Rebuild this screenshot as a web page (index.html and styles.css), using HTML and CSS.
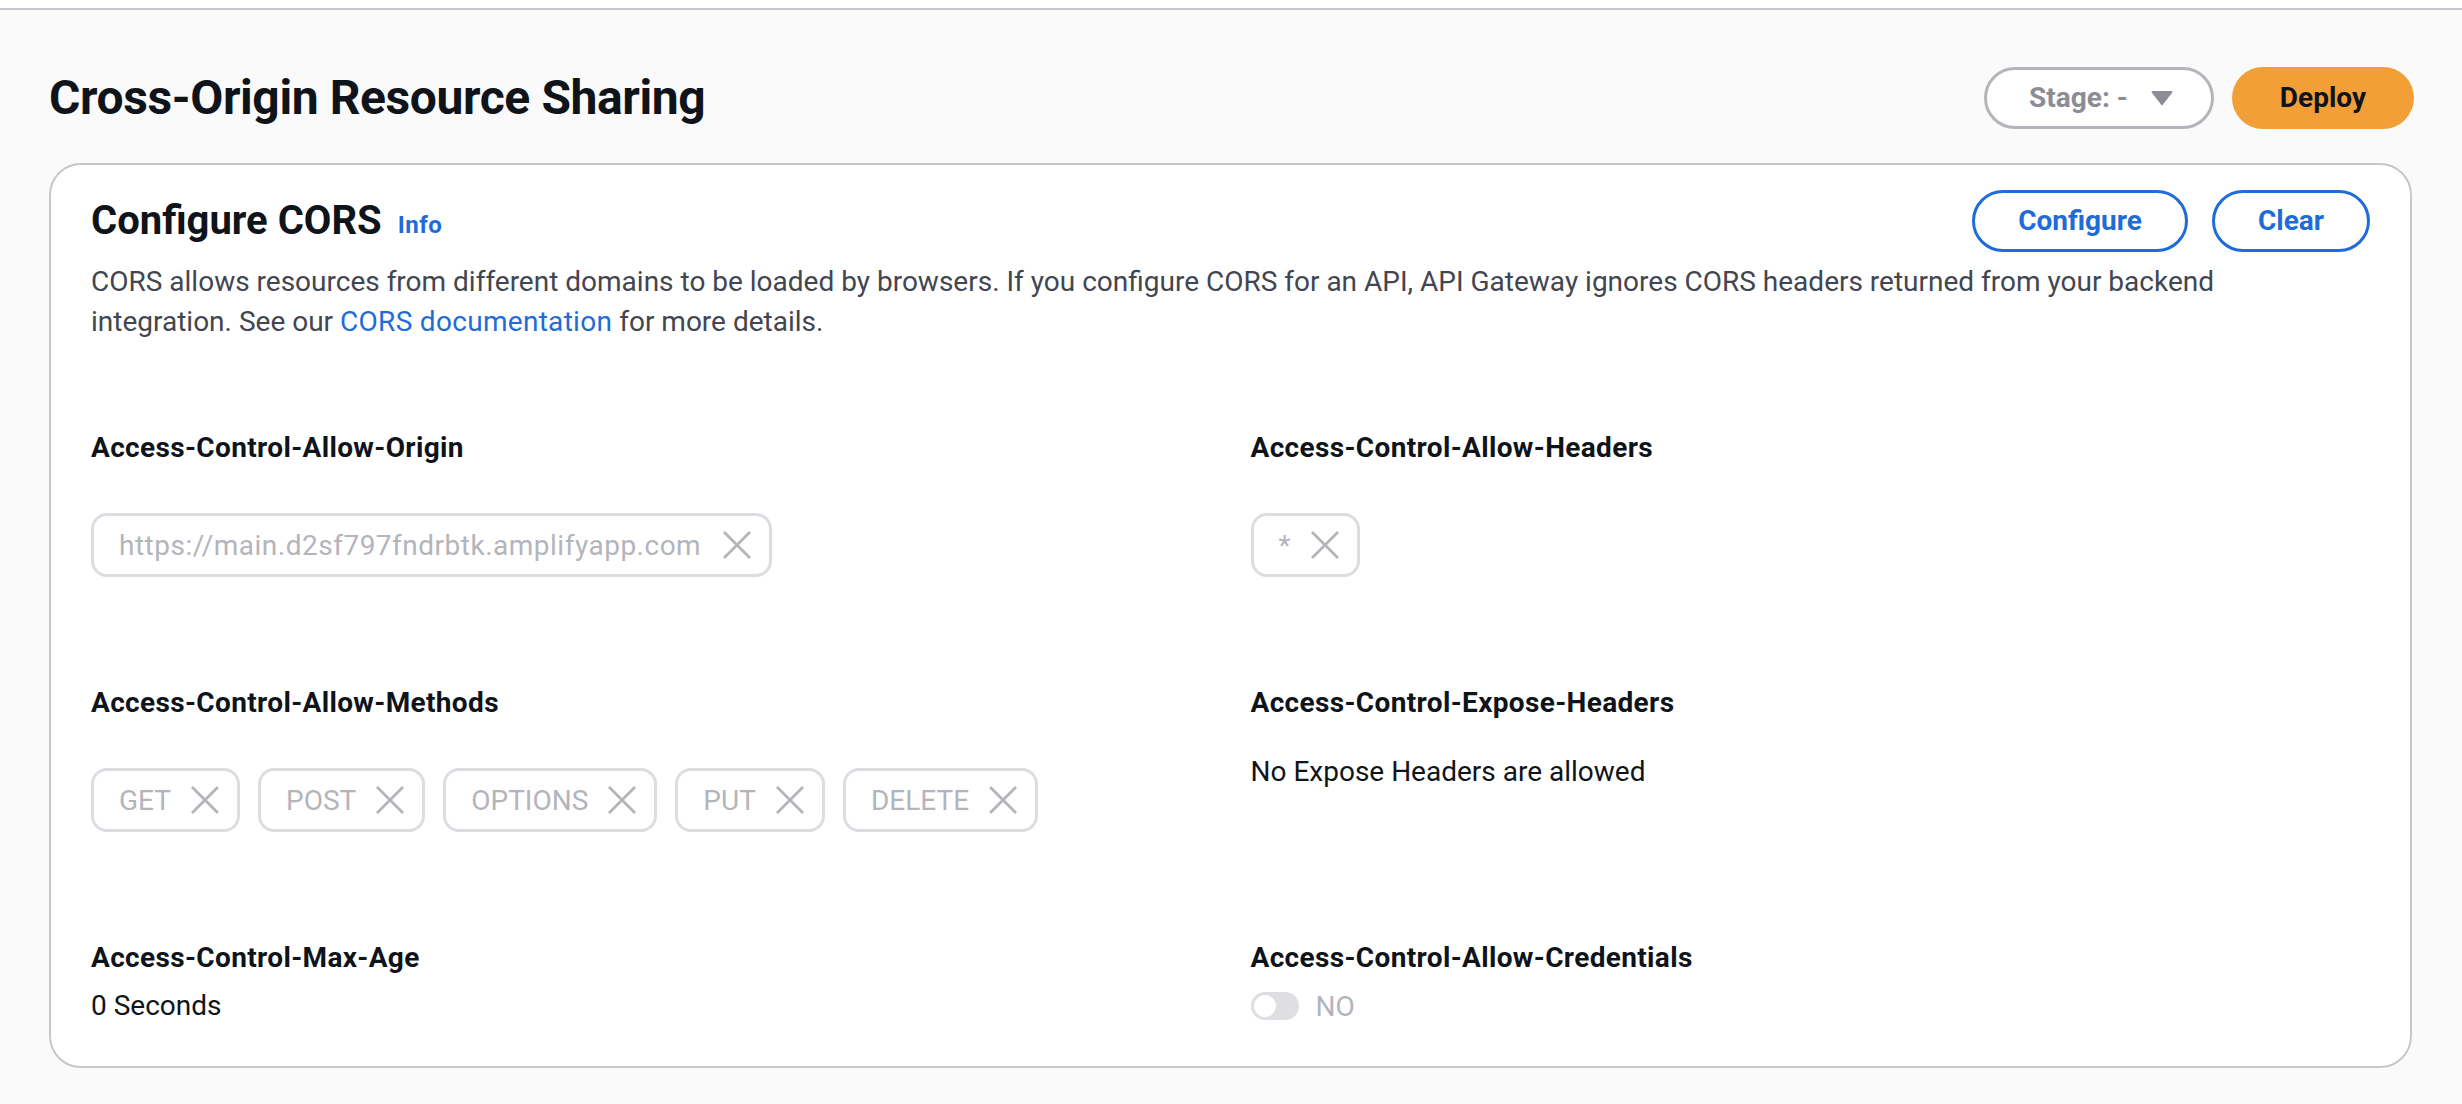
FILE: index.html
```html
<!DOCTYPE html>
<html lang="en">
<head>
<meta charset="utf-8">
<title>Cross-Origin Resource Sharing</title>
<link rel="stylesheet" href="styles.css">
</head>
<body>
<div class="topstrip"></div>
<div class="page">
  <header class="page-header">
    <h1 class="page-title">Cross-Origin Resource Sharing</h1>
    <div class="page-actions">
      <button class="btn btn-stage">Stage: -
        <svg class="caret" viewBox="0 0 22 16" aria-hidden="true"><path d="M1.5 1h19a1 1 0 0 1 .8 1.6l-9.5 12.2a1 1 0 0 1-1.6 0L.7 2.6A1 1 0 0 1 1.5 1z"/></svg>
      </button>
      <button class="btn btn-primary">Deploy</button>
    </div>
  </header>

  <section class="card">
    <div class="card-header">
      <div class="card-title">
        <h2 class="card-heading">Configure CORS</h2>
        <a class="info-link">Info</a>
      </div>
      <div class="card-actions">
        <button class="btn btn-normal">Configure</button>
        <button class="btn btn-normal">Clear</button>
      </div>
    </div>
    <p class="card-desc"><span class="desc-line">CORS allows resources from different domains to be loaded by browsers. If you configure CORS for an API, API Gateway ignores CORS headers returned from your backend</span><span class="desc-line">integration. See our <a class="link">CORS documentation</a> for more details.</span></p>

    <div class="fields">
      <div class="field">
        <div class="label">Access-Control-Allow-Origin</div>
        <div class="tags">
          <span class="tag tag-wide">https://main.d2sf797fndrbtk.amplifyapp.com<svg class="x" viewBox="0 0 16 16"><path d="M1.5 1.5l13 13M14.5 1.5l-13 13"/></svg></span>
        </div>
      </div>
      <div class="field">
        <div class="label">Access-Control-Allow-Headers</div>
        <div class="tags">
          <span class="tag">*<svg class="x" viewBox="0 0 16 16"><path d="M1.5 1.5l13 13M14.5 1.5l-13 13"/></svg></span>
        </div>
      </div>
      <div class="field">
        <div class="label">Access-Control-Allow-Methods</div>
        <div class="tags">
          <span class="tag">GET<svg class="x" viewBox="0 0 16 16"><path d="M1.5 1.5l13 13M14.5 1.5l-13 13"/></svg></span>
          <span class="tag">POST<svg class="x" viewBox="0 0 16 16"><path d="M1.5 1.5l13 13M14.5 1.5l-13 13"/></svg></span>
          <span class="tag">OPTIONS<svg class="x" viewBox="0 0 16 16"><path d="M1.5 1.5l13 13M14.5 1.5l-13 13"/></svg></span>
          <span class="tag">PUT<svg class="x" viewBox="0 0 16 16"><path d="M1.5 1.5l13 13M14.5 1.5l-13 13"/></svg></span>
          <span class="tag">DELETE<svg class="x" viewBox="0 0 16 16"><path d="M1.5 1.5l13 13M14.5 1.5l-13 13"/></svg></span>
        </div>
      </div>
      <div class="field">
        <div class="label">Access-Control-Expose-Headers</div>
        <div class="value value-spaced">No Expose Headers are allowed</div>
      </div>
      <div class="field">
        <div class="label">Access-Control-Max-Age</div>
        <div class="value">0 Seconds</div>
      </div>
      <div class="field">
        <div class="label">Access-Control-Allow-Credentials</div>
        <div class="toggle-row">
          <span class="toggle"><span class="knob"></span></span>
          <span class="toggle-text">NO</span>
        </div>
      </div>
    </div>
  </section>
</div>
</body>
</html>
```

FILE: styles.css
```css
* { box-sizing: border-box; }

body {
  margin: 0;
  background: #fafafa;
  font-family: Roboto, "Open Sans", Arial, sans-serif;
  color: #0f141a;
}

.topstrip {
  height: 10px;
  background: #ffffff;
  border-bottom: 2px solid #c6c6cd;
}

.page {
  padding: 57px 50px 40px 49px;
}

.page-header {
  display: flex;
  align-items: center;
  justify-content: space-between;
  height: 62px;
  margin-right: -2px;
}

.page-title {
  margin: 0;
  font-size: 48px;
  line-height: 56px;
  font-weight: 700;
  letter-spacing: -0.4px;
}

.page-actions {
  display: flex;
  gap: 18px;
}

.btn {
  display: inline-flex;
  align-items: center;
  height: 62px;
  border-radius: 31px;
  font-family: Roboto, "Open Sans", Arial, sans-serif;
  font-size: 28px;
  font-weight: 700;
  line-height: 1;
  padding: 0 40px;
  cursor: pointer;
}

.btn-stage {
  background: #ffffff;
  border: 3px solid #b4b4bb;
  color: #8c8c94;
  gap: 23px;
  padding: 0 38px 0 42px;
}

.caret {
  width: 22px;
  height: 16px;
  fill: #8c8c94;
}

.btn-primary {
  background: #f29f38;
  border: none;
  color: #0f141a;
  padding: 0 48px;
}

.btn-normal {
  background: #ffffff;
  border: 3px solid #1f6bd8;
  color: #1f6bd8;
  padding: 0 43px;
}

.card {
  margin-top: 34px;
  background: #ffffff;
  border: 2px solid #c6c6cd;
  border-radius: 32px;
  padding: 25px 40px 40px;
}

.card-header {
  display: flex;
  align-items: center;
  justify-content: space-between;
}

.card-title {
  display: flex;
  align-items: center;
  gap: 16px;
}

.card-heading {
  margin: 0;
  font-size: 40px;
  line-height: 48px;
  font-weight: 700;
}

.info-link {
  margin-top: 8px;
  font-size: 24px;
  line-height: 28px;
  font-weight: 700;
  letter-spacing: 0.5px;
  color: #1f6bd8;
}

.card-actions {
  display: flex;
  gap: 24px;
}

.card-desc {
  margin: 10px 0 0;
  font-size: 28px;
  line-height: 40px;
  color: #424650;
}

.desc-line {
  display: block;
}

.link {
  color: #1f6bd8;
  letter-spacing: 0.3px;
}

.fields {
  display: grid;
  grid-template-columns: 1fr 1fr;
  column-gap: 40px;
  row-gap: 106px;
  margin-top: 86px;
}

.label {
  font-size: 28px;
  line-height: 40px;
  font-weight: 700;
  letter-spacing: 0.35px;
}

.tags {
  display: flex;
  flex-wrap: wrap;
  gap: 18px;
  margin-top: 45px;
}

.tag {
  display: inline-flex;
  align-items: center;
  gap: 18px;
  height: 64px;
  padding: 0 16px 0 25px;
  border: 3px solid #dcdce1;
  border-radius: 16px;
  color: #b4b4bb;
  font-size: 28px;
}

.tag-wide {
  letter-spacing: 0.5px;
  gap: 20px;
}

.x {
  width: 32px;
  height: 32px;
  fill: none;
  stroke: #b4b4bb;
  stroke-width: 1.4;
}

.value {
  margin-top: 8px;
  font-size: 28px;
  line-height: 40px;
}

.value-spaced {
  margin-top: 29px;
}

.toggle-row {
  margin-top: 8px;
  height: 40px;
  display: flex;
  align-items: center;
  gap: 17px;
}

.toggle {
  width: 48px;
  height: 28px;
  border-radius: 14px;
  background: #dedee3;
  display: flex;
  align-items: center;
  padding-left: 3px;
}

.knob {
  width: 22px;
  height: 22px;
  border-radius: 50%;
  background: #ffffff;
}

.toggle-text {
  font-size: 28px;
  color: #b4b4bb;
}
```
